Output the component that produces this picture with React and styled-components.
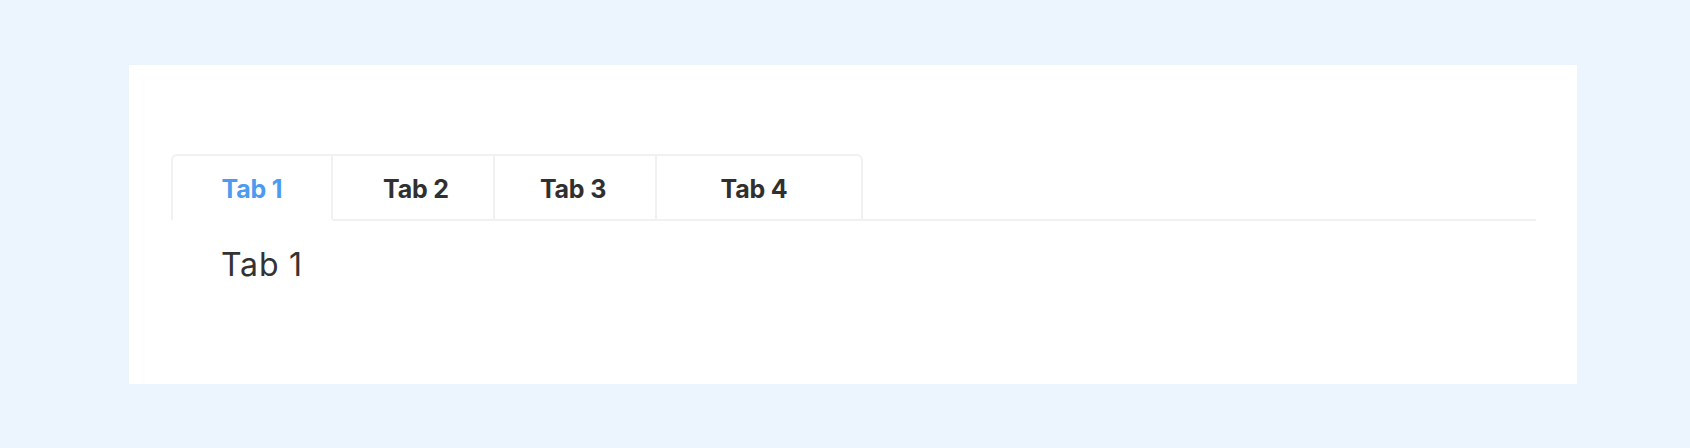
import React, { useState } from "react";
import styled, { createGlobalStyle } from "styled-components";

const GlobalStyle = createGlobalStyle`
  html, body {
    margin: 0;
    padding: 0;
    background: #ecf5fe;
  }
  body {
    font-family: Inter, "Noto Sans", sans-serif;
  }
`;

const Page = styled.div`
  padding: 65px 113px 64px 129px;
`;

const Card = styled.div`
  box-sizing: border-box;
  height: 319px;
  background: #ffffff;
  padding: 89px 41px 0 42px;
`;

const TabBar = styled.div`
  display: flex;
  border-bottom: 2px solid #f0f1f3;
`;

const Tab = styled.button`
  box-sizing: border-box;
  width: ${(p) => p.$width}px;
  height: 67px;
  margin: 0 0 -2px 0;
  padding: 3px ${(p) => p.$padRight}px 0 ${(p) => p.$padLeft}px;
  background: #ffffff;
  border: 2px solid #f0f1f3;
  border-left: ${(p) => (p.$first ? "2px solid #f0f1f3" : "none")};
  border-bottom-color: ${(p) => (p.$active ? "#ffffff" : "#f0f1f3")};
  border-top-left-radius: ${(p) => (p.$first ? "6px" : "0")};
  border-top-right-radius: ${(p) => (p.$last ? "6px" : "0")};
  font-family: Inter, "Noto Sans", sans-serif;
  font-size: 25px;
  font-weight: 700;
  letter-spacing: -0.2px;
  color: ${(p) => (p.$active ? "#4d9bf0" : "#303030")};
  display: flex;
  align-items: center;
  justify-content: center;
  cursor: pointer;
`;

const Panel = styled.div`
  padding: 24px 0 0 50px;
  font-size: 32px;
  font-weight: 400;
  letter-spacing: 0.8px;
  color: #333333;
  line-height: 39px;
`;

const tabs = [
  { key: 1, label: "Tab 1", width: 162, padLeft: 0, padRight: 0 },
  { key: 2, label: "Tab 2", width: 162, padLeft: 6, padRight: 0 },
  { key: 3, label: "Tab 3", width: 162, padLeft: 0, padRight: 4 },
  { key: 4, label: "Tab 4", width: 206, padLeft: 0, padRight: 10 },
];

export default function App() {
  const [active, setActive] = useState(1);
  const current = tabs.find((t) => t.key === active);
  return (
    <>
      <GlobalStyle />
      <Page>
        <Card>
          <TabBar>
            {tabs.map((t, i) => (
              <Tab
                key={t.key}
                $width={t.width}
                $padLeft={t.padLeft}
                $padRight={t.padRight}
                $first={i === 0}
                $last={i === tabs.length - 1}
                $active={t.key === active}
                onClick={() => setActive(t.key)}
              >
                {t.label}
              </Tab>
            ))}
          </TabBar>
          <Panel>{current.label}</Panel>
        </Card>
      </Page>
    </>
  );
}
